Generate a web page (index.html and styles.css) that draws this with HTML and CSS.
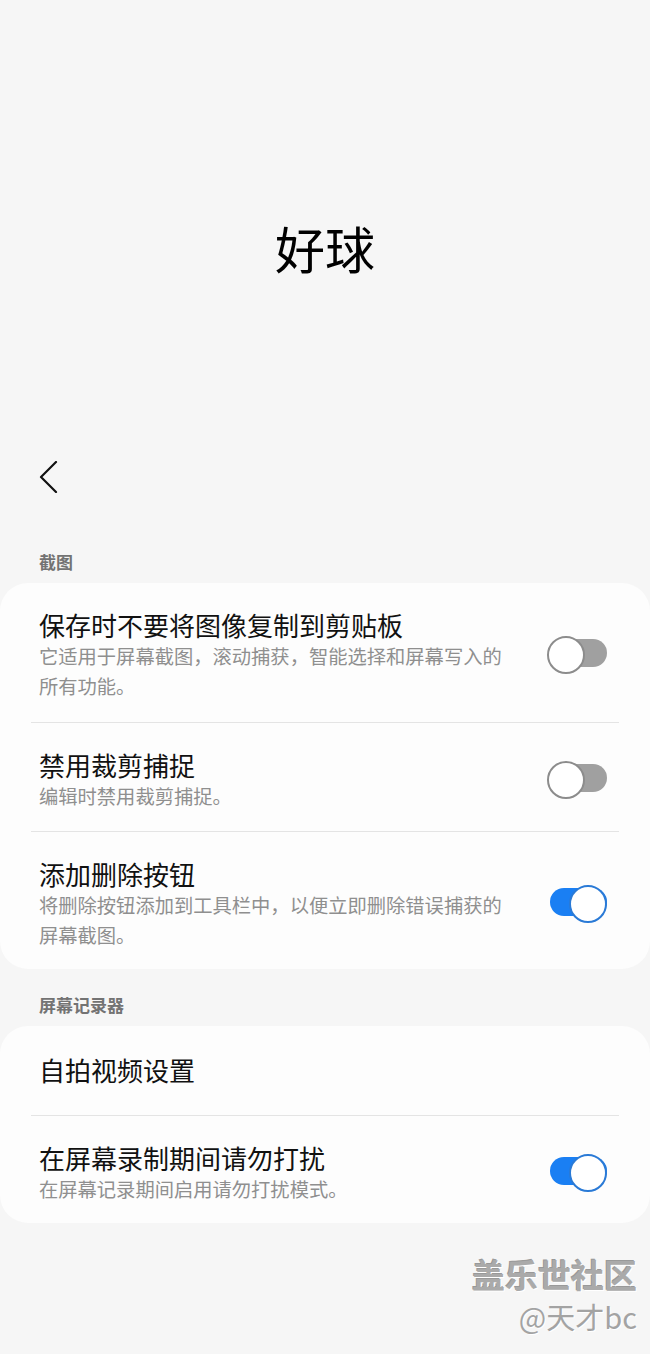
FILE: index.html
```html
<!DOCTYPE html>
<html lang="zh-CN">
<head>
    <meta charset="UTF-8">
    <meta name="viewport" content="width=device-width, initial-scale=1.0">
    <title>好球</title>
    <link rel="stylesheet" href="styles.css">
</head>
<body>

<div class="hero">好球</div>

<div class="appbar">
    <svg class="back" width="20" height="32" viewBox="0 0 20 32">
        <polyline points="17,1 2,16 17,31" fill="none" stroke="#111" stroke-width="2.2" stroke-linejoin="round" stroke-linecap="round"/>
    </svg>
</div>

<div class="section-title first">截图</div>
<div class="card">
    <div class="row">
        <div class="text">
            <div class="label">保存时不要将图像复制到剪贴板</div>
            <div class="desc">它适用于屏幕截图，滚动捕获，智能选择和屏幕写入的所有功能。</div>
        </div>
        <div class="switch"></div>
    </div>
    <div class="divider"></div>
    <div class="row">
        <div class="text">
            <div class="label">禁用裁剪捕捉</div>
            <div class="desc">编辑时禁用裁剪捕捉。</div>
        </div>
        <div class="switch"></div>
    </div>
    <div class="divider"></div>
    <div class="row">
        <div class="text">
            <div class="label">添加删除按钮</div>
            <div class="desc">将删除按钮添加到工具栏中，以便立即删除错误捕获的屏幕截图。</div>
        </div>
        <div class="switch on"></div>
    </div>
</div>

<div class="section-title">屏幕记录器</div>
<div class="card">
    <div class="row single">
        <div class="text">
            <div class="label">自拍视频设置</div>
        </div>
    </div>
    <div class="divider"></div>
    <div class="row">
        <div class="text">
            <div class="label">在屏幕录制期间请勿打扰</div>
            <div class="desc">在屏幕记录期间启用请勿打扰模式。</div>
        </div>
        <div class="switch on"></div>
    </div>
</div>

<div class="watermark">
    <div class="wm-name">盖乐世社区</div>
    <div class="wm-user">@天才bc</div>
</div>

</body>
</html>
```

FILE: styles.css
```css
* {
    margin: 0;
    padding: 0;
    box-sizing: border-box;
}

body {
    background-color: #f6f6f6;
    font-family: "Noto Sans CJK SC", "Noto Sans", sans-serif;
    color: #111;
}

.hero {
    height: 440px;
    padding-top: 217px;
    text-align: center;
    font-size: 50px;
    line-height: 60px;
    color: #000;
}

.appbar {
    height: 74px;
    padding-left: 39px;
    display: flex;
    align-items: center;
}

.section-title {
    padding: 24px 39px 9px;
    font-size: 17px;
    line-height: 24px;
    font-weight: bold;
    color: #737373;
}

.section-title.first {
    padding-top: 36px;
    padding-bottom: 9px;
}

.card {
    background-color: #fdfdfd;
    border-radius: 28px;
}

.row {
    display: flex;
    align-items: center;
    gap: 20px;
    padding: 26px 43px 20px 39px;
}

.row:first-child {
    padding-bottom: 21px;
}

.row:last-child {
    padding-bottom: 19px;
}

.row.single {
    padding-top: 28px;
    padding-bottom: 29px;
}

.text {
    width: 475px;
}

.label {
    font-size: 26px;
    line-height: 32px;
    color: #111;
}

.desc {
    font-size: 19.3px;
    line-height: 30px;
    color: #8f8f8f;
}

.divider {
    height: 1px;
    margin: 0 31px;
    background-color: #e4e4e4;
}

.switch {
    position: relative;
    width: 60px;
    height: 34px;
    margin-top: -4px;
    margin-left: auto;
    flex-shrink: 0;
}

.switch::before {
    content: "";
    position: absolute;
    left: 6px;
    right: 0;
    top: 3px;
    height: 28px;
    border-radius: 14px;
    background-color: #a0a0a0;
}

.switch::after {
    content: "";
    position: absolute;
    left: 0;
    top: 0;
    width: 34px;
    height: 34px;
    border-radius: 50%;
    background-color: #fff;
    border: 2px solid #8c8c8c;
}

.switch.on::before {
    left: 3px;
    background-color: #1a7ff3;
}

.switch.on::after {
    left: auto;
    right: 0;
    border-color: #2a7ad6;
}

.watermark {
    margin-top: 31px;
    padding-right: 13px;
    text-align: right;
    color: #a3a3a3;
}

.wm-name {
    font-size: 33px;
    line-height: 40px;
    font-weight: bold;
    color: #aaa;
    text-shadow: 1px 1px 0 #fff, -1px -1px 0 #999;
}

.wm-user {
    font-size: 29px;
    line-height: 44px;
    text-shadow: 1px 1px 0 #fff;
}
```
